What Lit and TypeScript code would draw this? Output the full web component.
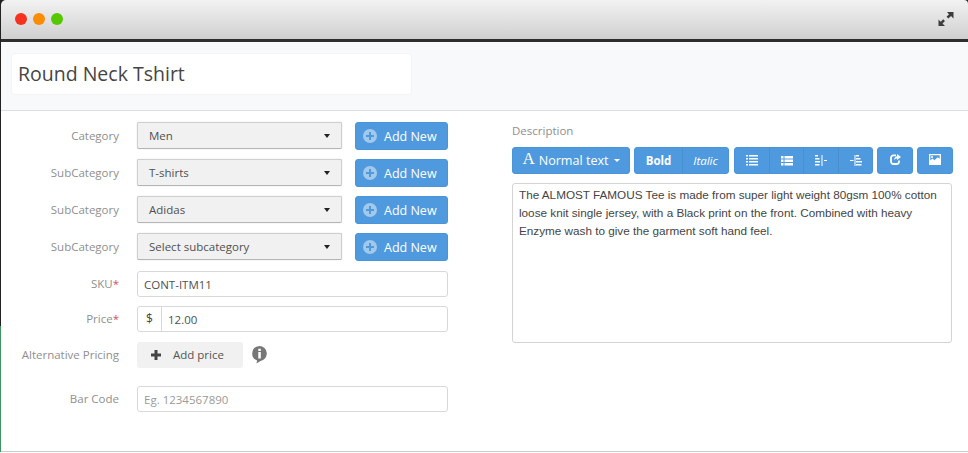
import { LitElement, html, css, svg } from "lit";
import { customElement } from "lit/decorators.js";

const listIcon = svg`<svg width="12" height="11" viewBox="0 0 12 11"><path fill="#fff" d="M0 0h2v1.500H0zM3 0h9v1.500H3zM0 3h2v1.500H0zM3 3h9v1.500H3zM0 6h2v1.500H0zM3 6h9v1.500H3zM0 9h2v1.500H0zM3 9h9v1.500H3z"/></svg>`;
const bulletIcon = svg`<svg width="12" height="10" viewBox="0 0 12 10"><path fill="#fff" d="M0 0h2.500v2.500H0zM3.500 0H12v2.500H3.500zM0 3.500h2.500V6H0zM3.500 3.500H12V6H3.500zM0 7h2.500v2.500H0zM3.500 7H12v2.500H3.500z"/></svg>`;
const outdentIcon = svg`<svg width="12" height="11" viewBox="0 0 12 11"><path fill="#fff" d="M0 0h3v1.500H0zM0 3h4.500v1.500H0zM0 6h5v1.500H0zM0 9h4.500v1.500H0zM6.500 0h1v11h-1zM9 5h3v1H9z"/></svg>`;
const indentIcon = svg`<svg width="12" height="11" viewBox="0 0 12 11"><path fill="#fff" d="M6 0h3v1.500H6zM6 3h4.500v1.500H6zM0 5h3.500v1H0zM6 6h6v1.500H6zM6 9h5.500v1.500H6zM4.500 0h1v11h-1z"/></svg>`;
const shareIcon = svg`<svg width="11" height="11" viewBox="0 0 11 11"><path fill="none" stroke="#fff" stroke-width="1.800" d="M6 1.400H3.500A2.500 2.500 0 0 0 1 4v3.500A2.500 2.500 0 0 0 3.500 10H6.500A2.500 2.500 0 0 0 9 7.500V6.500"/><path fill="#fff" d="M7 0l4 3-4 3V4.500C5.700 4.500 4.800 5 4 6.500 4.200 4.300 5.300 2.500 7 2.300z"/></svg>`;
const imageIcon = svg`<svg width="12" height="11" viewBox="0 0 12 11"><path fill="#fff" fill-rule="evenodd" d="M0 0h12v11H0zM1.300 1.300v5.200L3.500 4.500l1.800 1.800 3.500-3 1.900 1.400V1.300z"/><circle cx="3" cy="3" r="1" fill="#fff"/></svg>`;
const plusCircle = svg`<svg width="14" height="14" viewBox="0 0 14 14"><circle cx="7" cy="7" r="7" fill="#a2c8ec"/><path fill="#4f9ade" d="M6 3h2v3h3v2H8v3H6V8H3V6h3z"/></svg>`;
const expandIcon = svg`<svg width="16" height="16" viewBox="0 0 16 16"><path fill="#3d3d3d" d="M9 1h6.500v6.500L13 5l-2.600 2.600-1.900-1.900L11 3.200zM0.500 8.500v6.500H7l-2.500-2.500 2.500-2.500-1.800-1.800-2.500 2.500z"/></svg>`;
const infoIcon = svg`<svg width="15" height="18" viewBox="0 0 15 18"><path fill="#777" d="M7.500 0a7.500 7.500 0 0 1 1 14.900L4.500 17.500l.6-3A7.500 7.500 0 0 1 7.500 0z"/><path fill="#fff" d="M6.300 2.800h2.500v2.200H6.300zM6.300 6h2.500v6.500H6.300z"/></svg>`;
const plainPlus = svg`<svg width="10" height="10" viewBox="0 0 10 10"><path fill="#444" d="M3.500 0h3v3.500H10v3H6.500V10h-3V6.500H0v-3h3.500z"/></svg>`;

@customElement("app-root")
export class AppRoot extends LitElement {
  static styles = css`
    :host {
      display: block;
      width: 968px;
      height: 453px;
      overflow: hidden;
      font-family: "Open Sans", sans-serif;
      background: #fff;
    }
    .window {
      height: 452px;
      box-sizing: border-box;
      border-bottom: 1px solid #c9cccc;
      border-left: 1px solid #222;
      display: flex;
      flex-direction: column;
      position: relative;
      background: #222;
    }
    .green {
      position: absolute;
      left: -1px;
      top: 326px;
      bottom: -1px;
      width: 1px;
      background: #3f9560;
    }
    .titlebar {
      height: 38px;
      flex: none;
      background: linear-gradient(#f2f2f2, #d0d0d0);
      border-top-left-radius: 5px;
      border-top-right-radius: 4px;
      display: flex;
      align-items: center;
      padding: 0 14px 1px 14px;
      gap: 6px;
    }
    .dot { width: 12px; height: 12px; border-radius: 50%; }
    .red { background: #f4321f; }
    .orange { background: #fb8c05; }
    .lime { background: #56c800; }
    .expand { margin-left: auto; display: flex; padding-bottom: 1px; }
    .rule { height: 3px; background: #2e2e2e; flex: none; }
    .head {
      height: 69px;
      flex: none;
      box-sizing: border-box;
      background: #f8f9fb;
      border-bottom: 1px solid #dcdee0;
      padding: 12px 0 0 11px;
    }
    .title {
      width: 399px;
      height: 40px;
      box-sizing: border-box;
      background: #fff;
      border-radius: 3px;
      box-shadow: 0 0 2px #e6e8ea;
      padding: 0 6px;
      font-size: 19.500px;
      line-height: 40px;
      color: #454545;
    }
    .body {
      flex: 1;
      display: flex;
      background: #fff;
    }
    .form {
      width: 447px;
      flex: none;
      padding-top: 11px;
      display: flex;
      flex-direction: column;
    }
    .row {
      display: flex;
      align-items: flex-start;
      height: 28px;
      margin-bottom: 9px;
    }
    .row.select-last { margin-bottom: 10px; }
    .row.sku { height: 26px; margin-bottom: 9px; }
    .row.price { height: 26px; margin-bottom: 10px; }
    .row.alt { height: 26px; margin-bottom: 18px; }
    .row.bar { height: 26px; margin-bottom: 0; }
    .label {
      width: 118px;
      flex: none;
      text-align: right;
      font-size: 11.500px;
      line-height: 26px;
      color: #8f8f8f;
      margin-right: 18px;
    }
    .label.tall { line-height: 27px; }
    .req { color: #d4506a; }
    .select {
      width: 205px;
      height: 27px;
      box-sizing: border-box;
      flex: none;
      background: #f1f1f1;
      border: 1px solid #cfcfcf;
      border-bottom-color: #b5b5b5;
      border-radius: 2px;
      box-shadow: 0 0 1px #bbb;
      display: flex;
      align-items: center;
      padding: 0 11px;
      font-size: 11.500px;
      color: #505050;
      justify-content: space-between;
    }
    .caret {
      width: 0;
      height: 0;
      border-left: 3.500px solid transparent;
      border-right: 3.500px solid transparent;
      border-top: 4px solid #222;
    }
    .add {
      margin-left: 13px;
      width: 93px;
      height: 28px;
      box-sizing: border-box;
      background: #4f9ade;
      border: 1px solid #4a94d8;
      border-radius: 3px;
      color: #fff;
      font-size: 12.500px;
      display: flex;
      align-items: center;
      padding-left: 7px;
      gap: 7px;
    }
    .add svg { flex: none; }
    .input {
      width: 311px;
      height: 26px;
      box-sizing: border-box;
      border: 1px solid #d8d8d8;
      border-radius: 3px;
      display: flex;
      align-items: center;
      font-size: 11.500px;
      color: #505050;
      padding: 0 6px;
      background: #fff;
    }
    .input.ph { color: #9a9a9a; }
    .input.joined { padding: 0; }
    .addon {
      width: 24px;
      height: 100%;
      box-sizing: border-box;
      border-right: 1px solid #d8d8d8;
      display: flex;
      align-items: center;
      justify-content: center;
      color: #444;
      padding-bottom: 2px;
      font-size: 12px;
    }
    .value { padding-left: 6px; }
    .addprice {
      width: 106px;
      height: 26px;
      background: #f1f1f1;
      border-radius: 3px;
      display: flex;
      align-items: center;
      padding-left: 14px;
      box-sizing: border-box;
      font-size: 11.500px;
      color: #555;
      gap: 12px;
    }
    .addprice span { padding-bottom: 1px; }
    .info { margin-left: 9px; display: flex; padding-top: 4px; }
    .desc {
      margin-left: 64px;
      padding-top: 12px;
      width: 441px;
    }
    .desc-label {
      font-size: 11.500px;
      line-height: 16px;
      color: #8f8f8f;
      margin-bottom: 8px;
    }
    .toolbar {
      display: flex;
      gap: 4px;
      height: 27px;
      margin-bottom: 9px;
    }
    .btns {
      display: flex;
      background: #4f9ade;
      border: 1px solid #4a94d8;
      border-radius: 3px;
      box-sizing: border-box;
      color: #fff;
      font-size: 11.500px;
    }
    .btns > span {
      display: flex;
      align-items: center;
      justify-content: center;
      height: 100%;
      box-sizing: border-box;
    }
    .btns > span + span { border-left: 1px solid #4a8fce; }
    .normal { width: 116px; font-size: 12.600px; gap: 4px; }
    .normal b { font-family: "Liberation Serif", serif; font-size: 17px; font-weight: 400; line-height: 17px; padding-bottom: 4px; }
    .mini-caret {
      width: 0; height: 0;
      border-left: 3.500px solid transparent;
      border-right: 3.500px solid transparent;
      border-top: 3.500px solid #fff;
      margin-left: 1px;
    }
    .bold { width: 47px; font-weight: 700; }
    .italic { width: 46px; font-style: italic; }
    .spaced { margin-left: 1px; }
    .ico { width: 34px; }
    .ico:nth-child(3) { width: 35px; }
    .single { width: 34px; padding-bottom: 2px; }
    .text {
      width: 440px;
      height: 160px;
      box-sizing: border-box;
      border: 1px solid #d4d4d4;
      border-radius: 3px;
      padding: 2px 6px;
      font-family: "Liberation Sans", Arial, sans-serif;
      font-size: 11.720px;
      line-height: 18px;
      color: #444;
    }
    .text p { margin: 0; }
  `;

  private selectRow(label: string, value: string, cls = "") {
    return html`<div class="row ${cls}">
      <div class="label tall">${label}</div>
      <div class="select"><span>${value}</span><span class="caret"></span></div>
      <div class="add">${plusCircle}<span>Add New</span></div>
    </div>`;
  }

  render() {
    return html`<div class="window">
      <div class="green"></div>
      <div class="titlebar">
        <span class="dot red"></span><span class="dot orange"></span><span class="dot lime"></span>
        <span class="expand">${expandIcon}</span>
      </div>
      <div class="rule"></div>
      <div class="head"><div class="title">Round Neck Tshirt</div></div>
      <div class="body">
        <div class="form">
          ${this.selectRow("Category", "Men")}
          ${this.selectRow("SubCategory", "T-shirts")}
          ${this.selectRow("SubCategory", "Adidas")}
          ${this.selectRow("SubCategory", "Select subcategory", "select-last")}
          <div class="row sku">
            <div class="label">SKU<span class="req">*</span></div>
            <div class="input">CONT-ITM11</div>
          </div>
          <div class="row price">
            <div class="label">Price<span class="req">*</span></div>
            <div class="input joined"><span class="addon">$</span><span class="value">12.00</span></div>
          </div>
          <div class="row alt">
            <div class="label">Alternative Pricing</div>
            <div class="addprice">${plainPlus}<span>Add price</span></div>
            <span class="info">${infoIcon}</span>
          </div>
          <div class="row bar">
            <div class="label">Bar Code</div>
            <div class="input ph">Eg. 1234567890</div>
          </div>
        </div>
        <div class="desc">
          <div class="desc-label">Description</div>
          <div class="toolbar">
            <div class="btns"><span class="normal"><b>A</b>Normal text<i class="mini-caret"></i></span></div>
            <div class="btns"><span class="bold">Bold</span><span class="italic">Italic</span></div>
            <div class="btns spaced">
              <span class="ico">${listIcon}</span><span class="ico">${bulletIcon}</span><span class="ico">${outdentIcon}</span><span class="ico">${indentIcon}</span>
            </div>
            <div class="btns"><span class="single">${shareIcon}</span></div>
            <div class="btns"><span class="single">${imageIcon}</span></div>
          </div>
          <div class="text"><p>The ALMOST FAMOUS Tee is made from super light weight 80gsm 100% cotton loose knit single jersey, with a Black print on the front. Combined with heavy Enzyme wash to give the garment soft hand feel.</p></div>
        </div>
      </div>
    </div>`;
  }
}
